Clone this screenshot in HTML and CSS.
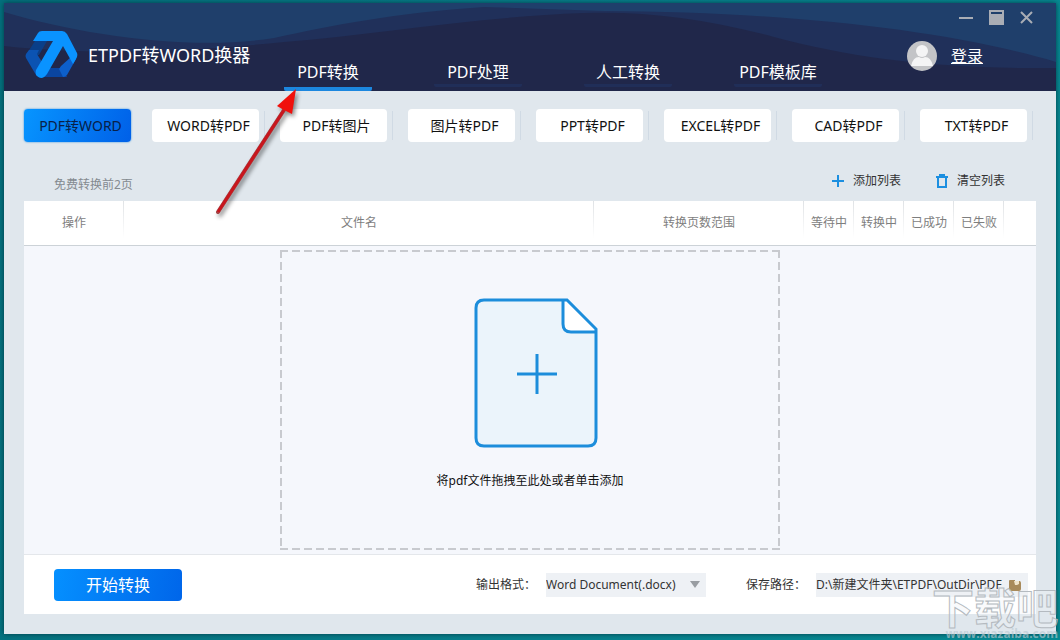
FILE: index.html
```html
<!DOCTYPE html>
<html lang="zh-CN">
<head>
<meta charset="utf-8">
<title>ETPDF转WORD换器</title>
<link rel="stylesheet" href="styles.css">
</head>
<body>
<div class="window">
  <header class="header">
    <svg class="waves" viewBox="0 0 1052 88" preserveAspectRatio="none" aria-hidden="true">
      <path fill="#20305a" d="M0 0H1052V65C930 66 850 55 770 34C700 15 640 8 580 10C470 14 370 32 280 39C200 47 100 54 0 43Z"/>
      <path fill="#1f3f6b" d="M0 0H1052V59C940 26 780 9 600 8L480 4C390 10 330 22 270 35C190 48 80 33 0 9Z"/>
    </svg>
    <div class="brand">
      <svg width="54" height="48" viewBox="0 0 54 48" aria-hidden="true">
        <path fill="#0a3f88" d="M10 10H22L14 24H1Z"/>
        <path fill="#0b53b2" d="M1 23Q0 25 1 27L11 44Q13 46 15 46L20 36L12 23L14 19H4Z"/>
        <path fill="#0a45a0" d="M24 37H38L42 46H14L20 37Z"/>
        <path fill="#0d5fca" d="M46 26L51 28L42 44Q40 46 38 46L34 38L36 35Z"/>
        <path fill="#0a93ff" d="M8 10L13 2Q14 0 17 0H37Q40 0 42 3L52 22Q53 25 51 28L48 33L38 15L22 43Q17 50 12 45Q10 43 11 39L28 10Z"/>
      </svg>
      <h1 class="title">ETPDF转WORD换器</h1>
    </div>
    <nav class="nav">
      <a class="nav-link is-active" href="#">PDF转换</a>
      <a class="nav-link" href="#">PDF处理</a>
      <a class="nav-link" href="#">人工转换</a>
      <a class="nav-link" href="#">PDF模板库</a>
    </nav>
    <div class="account">
      <div class="controls">
        <button class="control" aria-label="最小化"><svg width="15" height="15" viewBox="0 0 15 15"><path fill="#a9adb5" d="M0 7h14v2H0z"/></svg></button>
        <button class="control" aria-label="最大化"><svg width="15" height="15" viewBox="0 0 15 15"><path fill="#a9adb5" fill-rule="evenodd" d="M0 0h15v15H0zM2 2v2h11V2z"/></svg></button>
        <button class="control" aria-label="关闭"><svg width="15" height="15" viewBox="0 0 15 15"><path stroke="#a9adb5" stroke-width="2" d="M2 2L13 13M13 2L2 13"/></svg></button>
      </div>
      <div class="user">
        <svg width="30" height="30" viewBox="0 0 30 30" aria-hidden="true">
          <circle cx="15" cy="15" r="15" fill="#c3c4c7"/>
          <circle cx="15" cy="10" r="6" fill="#f4f4f5"/>
          <path fill="#f4f4f5" d="M4 25Q6 16 12 16Q15 18 18 16Q24 16 26 25Z"/>
        </svg>
        <a class="login" href="#">登录</a>
      </div>
    </div>
  </header>

  <main class="content">
    <div class="modes">
      <button class="mode is-active">PDF转WORD</button>
      <button class="mode">WORD转PDF</button>
      <button class="mode">PDF转图片</button>
      <button class="mode">图片转PDF</button>
      <button class="mode">PPT转PDF</button>
      <button class="mode">EXCEL转PDF</button>
      <button class="mode">CAD转PDF</button>
      <button class="mode">TXT转PDF</button>
    </div>
    <div class="toolbar">
      <span class="note">免费转换前2页</span>
      <div class="actions">
        <button class="action"><svg width="14" height="14" viewBox="0 0 14 14"><path stroke="#1c8fe0" stroke-width="2" d="M1 7H13M7 1V13"/></svg>添加列表</button>
        <button class="action"><svg width="14" height="14" viewBox="0 0 14 14"><path fill="none" stroke="#1c8fe0" stroke-width="2" d="M1 3H13M4 1H10M3 3V13H11V3"/></svg>清空列表</button>
      </div>
    </div>
    <section class="panel">
      <table class="files">
        <colgroup><col class="col-op"><col><col class="col-range"><col class="col-state"><col class="col-state"><col class="col-state"><col class="col-state"><col class="col-end"></colgroup>
        <thead>
          <tr><th>操作</th><th>文件名</th><th>转换页数范围</th><th>等待中</th><th>转换中</th><th>已成功</th><th>已失败</th><td></td></tr>
        </thead>
      </table>
      <div class="drop-area">
        <button class="drop-zone">
          <svg width="124" height="150" viewBox="0 0 124 150" aria-hidden="true">
            <path fill="#ebf4fb" d="M10 2H92L122 32V140Q122 148 114 148H10Q2 148 2 140V10Q2 2 10 2Z"/>
            <path fill="#fff" d="M89 2H93L122 31V34H97Q89 34 89 26Z"/>
            <path fill="none" stroke="#1c8ddb" stroke-width="3" d="M10 2H93L122 31V140Q122 148 114 148H10Q2 148 2 140V10Q2 2 10 2ZM89 2V26Q89 34 97 34H122M43 76H83M63 56V96"/>
          </svg>
          <span>将pdf文件拖拽至此处或者单击添加</span>
        </button>
      </div>
      <footer class="footer">
        <button class="start">开始转换</button>
        <div class="field format-field">
          <label for="format">输出格式：</label>
          <select id="format" class="format"><option>Word Document(.docx)</option></select>
        </div>
        <div class="field">
          <label for="path">保存路径：</label>
          <div class="path-box">
            <input id="path" class="path" type="text" value="D:\新建文件夹\ETPDF\OutDir\PDF">
            <button class="browse" aria-label="浏览"><svg width="12" height="12" viewBox="0 0 12 12"><path fill="#a88a5b" d="M1 1H6V4H9V2H11Q12 3 12 4V10Q12 12 10 12H2Q0 12 0 10V2Q0 1 1 1Z"/><path fill="#f0e4cb" d="M5 2H10V5L8 6H6Z"/></svg></button>
          </div>
        </div>
      </footer>
    </section>
  </main>
</div>
<svg class="arrow" width="100" height="136" viewBox="0 0 100 136" aria-hidden="true">
  <path fill="none" stroke="#a3484a" stroke-width="4" stroke-linecap="round" d="M9 131L75 29"/>
  <path fill="none" stroke="#c8161d" stroke-width="3" d="M9 131L75 29"/>
  <path fill="#f0100c" d="M68 25L87 8L83 33L75 29Z"/>
</svg>
<div class="watermark" aria-hidden="true"><span class="watermark-name">下载吧</span><span class="watermark-url">www.xiazaiba.com</span></div>
</body>
</html>
```
FILE: styles.css
```css
* { box-sizing: border-box; }

body {
  margin: 0;
  min-height: 100vh;
  display: flex;
  padding: 3px 4px 6px;
  position: relative;
  overflow: hidden;
  background: linear-gradient(100deg, #04707d, #087f8b 50%, #078c94);
  font: 12px/18px "Noto Sans", "Noto Sans CJK SC", sans-serif;
  color: #333;
}

button, input, select { font: inherit; color: inherit; border: 0; padding: 0; background: none; }
svg { display: block; flex: none; }

.window {
  flex: 1;
  display: flex;
  flex-direction: column;
  background: #e0e7ed;
  box-shadow: 0 0 5px #003c48;
}

.header {
  position: relative;
  display: flex;
  height: 88px;
  background: #20274a;
  color: #fff;
}
.waves { position: absolute; inset: 0; width: 100%; height: 100%; }
.brand, .nav, .account { position: relative; }
.brand { display: flex; align-items: center; gap: 9px; width: 280px; padding: 16px 0 0 21px; }
.title { margin: 0; font-size: 18px; line-height: 24px; font-weight: 400; white-space: nowrap; }

.nav { display: flex; align-items: flex-end; gap: 62px; }
.nav-link {
  width: 88px;
  margin-bottom: 4px;
  border-bottom: 3px solid #202e58;
  border-radius: 2px;
  color: #fff;
  font-size: 16px;
  line-height: 24px;
  text-align: center;
  text-decoration: none;
  white-space: nowrap;
}
.nav-link.is-active { margin-bottom: 0; padding-bottom: 3px; border-bottom: 4px solid #1c87df; }

.account { margin-left: auto; padding: 7px 22px 0 0; }
.controls { display: flex; justify-content: flex-end; gap: 15px; }
.user { display: flex; align-items: center; gap: 14px; margin: 16px 51px 0 0; }
.login { color: #fff; font-size: 16px; line-height: 24px; }

.content { flex: 1; display: flex; flex-direction: column; padding: 18px 20px 20px; }
.modes { display: grid; grid-template-columns: repeat(8, 1fr); gap: 21px; padding: 0 9px 0 0; }
.mode {
  position: relative;
  height: 33px;
  padding-left: 6px;
  border-radius: 4px;
  background: #fff;
  color: #111;
  font-size: 14px;
  white-space: nowrap;
}
.mode::after {
  content: "";
  position: absolute;
  top: 2px;
  bottom: 2px;
  right: -6px;
  width: 1px;
  background: #d0dae4;
}
.mode.is-active { background: linear-gradient(110deg, #0795ff, #0060e8); box-shadow: 0 0 2px #1c87df; color: #082048; }
.mode.is-active::after { display: none; }

.toolbar { display: flex; justify-content: space-between; align-items: center; height: 59px; padding: 18px 31px 0 30px; }
.note { color: #848a90; padding-top: 8px; }
.actions { display: flex; gap: 34px; }
.action { display: flex; align-items: center; gap: 8px; }

.panel { flex: 1; display: flex; flex-direction: column; background: #fff; }
.files { width: 100%; table-layout: fixed; border-collapse: collapse; border-bottom: 1px solid #ccd2d7; }
.files th, .files td { height: 44px; padding: 0; font-weight: 400; color: #7e7e7e; }
.files th { background: linear-gradient(#dfe2e5, #fff 85%) right / 1px 100% no-repeat; }
.col-op { width: 100px; }
.col-range { width: 210px; }
.col-state { width: 50px; }
.col-end { width: 32px; }

.drop-area { flex: 1; padding: 4px 20px; display: flex; justify-content: center; background: #f5f7fc; border-bottom: 1px solid #e4e7eb; }
.drop-zone {
  width: 500px;
  display: flex;
  flex-direction: column;
  align-items: center;
  justify-content: center;
  gap: 24px;
  padding-bottom: 12px;
  background:
    repeating-linear-gradient(90deg, #c8cacf 0 8px, transparent 8px 12px) top / 100% 2px no-repeat,
    repeating-linear-gradient(90deg, #c8cacf 0 8px, transparent 8px 12px) bottom / 100% 2px no-repeat,
    repeating-linear-gradient(#c8cacf 0 8px, transparent 8px 12px) left / 2px 100% no-repeat,
    repeating-linear-gradient(#c8cacf 0 8px, transparent 8px 12px) right / 2px 100% no-repeat;
  color: #111;
}
.drop-zone svg { margin-left: 12px; }

.footer { display: flex; align-items: center; height: 59px; padding: 0 8px 0 30px; }
.start {
  width: 128px;
  height: 32px;
  border-radius: 4px;
  background: linear-gradient(100deg, #0590ff, #0066ea);
  color: #fff;
  font-size: 16px;
  line-height: 24px;
}
.field { display: flex; align-items: center; gap: 10px; white-space: nowrap; }
.format-field { margin-left: auto; margin-right: 40px; }
.format {
  appearance: none;
  width: 160px;
  height: 24px;
  background: #eef1f5 url("data:image/svg+xml,%3Csvg xmlns='http://www.w3.org/2000/svg' width='10' height='7'%3E%3Cpath fill='%23999da2' d='M0 0H10L5 7Z'/%3E%3C/svg%3E") no-repeat right 6px center;
}
.path-box { display: flex; align-items: center; width: 212px; height: 24px; padding-right: 7px; background: #eef1f5; }
.path { flex: 1; min-width: 0; }

.arrow { position: absolute; left: 209px; top: 81px; filter: drop-shadow(2px 3px 2px rgba(0, 0, 0, .45)); }

.watermark { position: absolute; right: 2px; bottom: 0; display: flex; flex-direction: column; align-items: flex-end; pointer-events: none; }
.watermark-name { font: 700 42px/44px "Noto Sans CJK SC", sans-serif; color: rgba(240, 243, 247, .35); -webkit-text-stroke: 1px #b4bac0; }
.watermark-url { font: 700 12px/12px "Open Sans", sans-serif; color: rgba(185, 202, 210, .65); }
```
